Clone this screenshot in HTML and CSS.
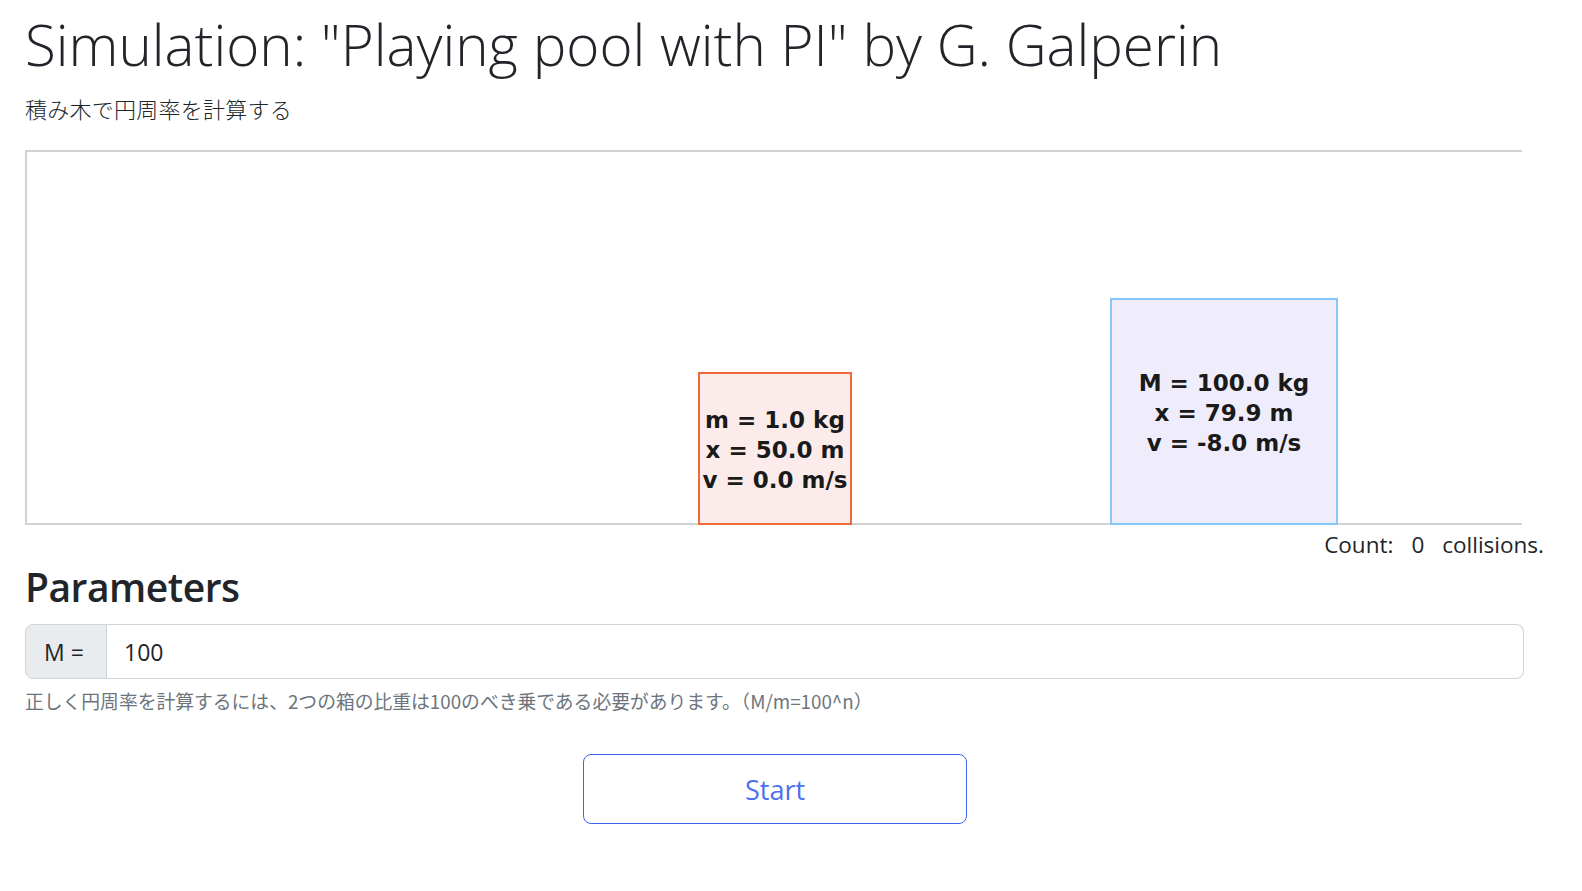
FILE: index.html
```html
<!DOCTYPE html>
<html lang="ja">
<head>
<meta charset="utf-8">
<title>Playing pool with PI</title>
<link rel="stylesheet" href="styles.css">
</head>
<body>
<main class="container">
  <h1 class="title">Simulation: "Playing pool with PI" by G. Galperin</h1>
  <p class="lead">積み木で円周率を計算する</p>

  <div class="stage">
    <div class="block block-small">
      <span>m = 1.0 kg</span>
      <span>x = 50.0 m</span>
      <span>v = 0.0 m/s</span>
    </div>
    <div class="block block-big">
      <span>M = 100.0 kg</span>
      <span>x = 79.9 m</span>
      <span>v = -8.0 m/s</span>
    </div>
  </div>
  <div class="count"><span>Count:</span><span class="num">0</span><span>collisions.</span></div>

  <h2 class="section">Parameters</h2>
  <div class="input-group">
    <span class="prepend">M =</span>
    <input class="field" type="text" value="100">
  </div>
  <p class="help">正しく円周率を計算するには、2つの箱の比重は100のべき乗である必要があります。（M/m=100^n）</p>

  <div class="actions">
    <button class="btn-start" type="button">Start</button>
  </div>
</main>
</body>
</html>
```

FILE: styles.css
```css
html, body {
  margin: 0;
  padding: 0;
  background: #ffffff;
}

body {
  font-family: "Open Sans", "Noto Sans CJK JP", sans-serif;
  color: #212529;
}

.container {
  width: 1500px;
  margin-left: 25px;
}

.title {
  font-size: 56.5px;
  font-weight: 300;
  line-height: 60px;
  margin: 15px 0 0 0;
}

.lead {
  font-family: "Noto Sans CJK JP", sans-serif;
  font-size: 22px;
  font-weight: 300;
  letter-spacing: 0.25px;
  line-height: 30px;
  margin: 18px 0 0 0;
}

.stage {
  position: relative;
  margin-top: 27px;
  width: 1495px;
  height: 371px;
  border-top: 2px solid #d2d2d2;
  border-left: 2px solid #d2d2d2;
  border-bottom: 2px solid #d2d2d2;
}

.block {
  position: absolute;
  bottom: -2px;
  box-sizing: border-box;
  border: 2px solid;
  display: flex;
  flex-direction: column;
  justify-content: center;
  align-items: center;
  overflow: hidden;
  white-space: nowrap;
  font-family: "DejaVu Sans", Verdana, sans-serif;
  font-weight: bold;
  font-size: 23px;
  line-height: 30px;
  color: #1a1a1a;
}

.block-small {
  left: 671px;
  width: 154px;
  height: 153px;
  border-color: #f0693a;
  background: #fbeceb;
  padding-top: 2px;
}

.block-big {
  left: 1083px;
  width: 228px;
  height: 227px;
  border-color: #86c8fa;
  background: #efedfb;
  padding-top: 2px;
}

.count {
  display: flex;
  justify-content: flex-end;
  gap: 18px;
  margin-right: -19px;
  font-size: 22.5px;
  line-height: 30px;
  margin-top: 5px;
}

.section {
  font-size: 39px;
  font-weight: 600;
  line-height: 46px;
  margin: 4px 0 0 0;
  letter-spacing: -0.5px;
}

.input-group {
  display: flex;
  margin-top: 14px;
  width: 1499px;
  height: 55px;
  box-sizing: border-box;
}

.prepend {
  display: flex;
  align-items: center;
  box-sizing: border-box;
  width: 82px;
  padding-left: 18px;
  background: #e9ecef;
  border: 1px solid #ced4da;
  border-radius: 8px 0 0 8px;
  font-size: 23px;
  color: #212529;
}

.field {
  flex: 1;
  box-sizing: border-box;
  height: 55px;
  margin: 0;
  border: 1px solid #ced4da;
  border-left: none;
  border-radius: 0 8px 8px 0;
  padding: 0 17px;
  font-family: "Open Sans", sans-serif;
  font-size: 23px;
  color: #212529;
  background: #fff;
  outline: none;
}

.help {
  font-family: "Noto Sans CJK JP", sans-serif;
  font-size: 18.8px;
  line-height: 26px;
  color: #6c757d;
  margin: 9px 0 0 0;
}

.actions {
  display: flex;
  justify-content: center;
  margin-top: 40px;
}

.btn-start {
  width: 384px;
  height: 70px;
  box-sizing: border-box;
  background: #fff;
  border: 1.5px solid #3b64f2;
  border-radius: 8px;
  color: #4d6ff2;
  font-family: "Open Sans", sans-serif;
  font-size: 27px;
  cursor: pointer;
}
```
